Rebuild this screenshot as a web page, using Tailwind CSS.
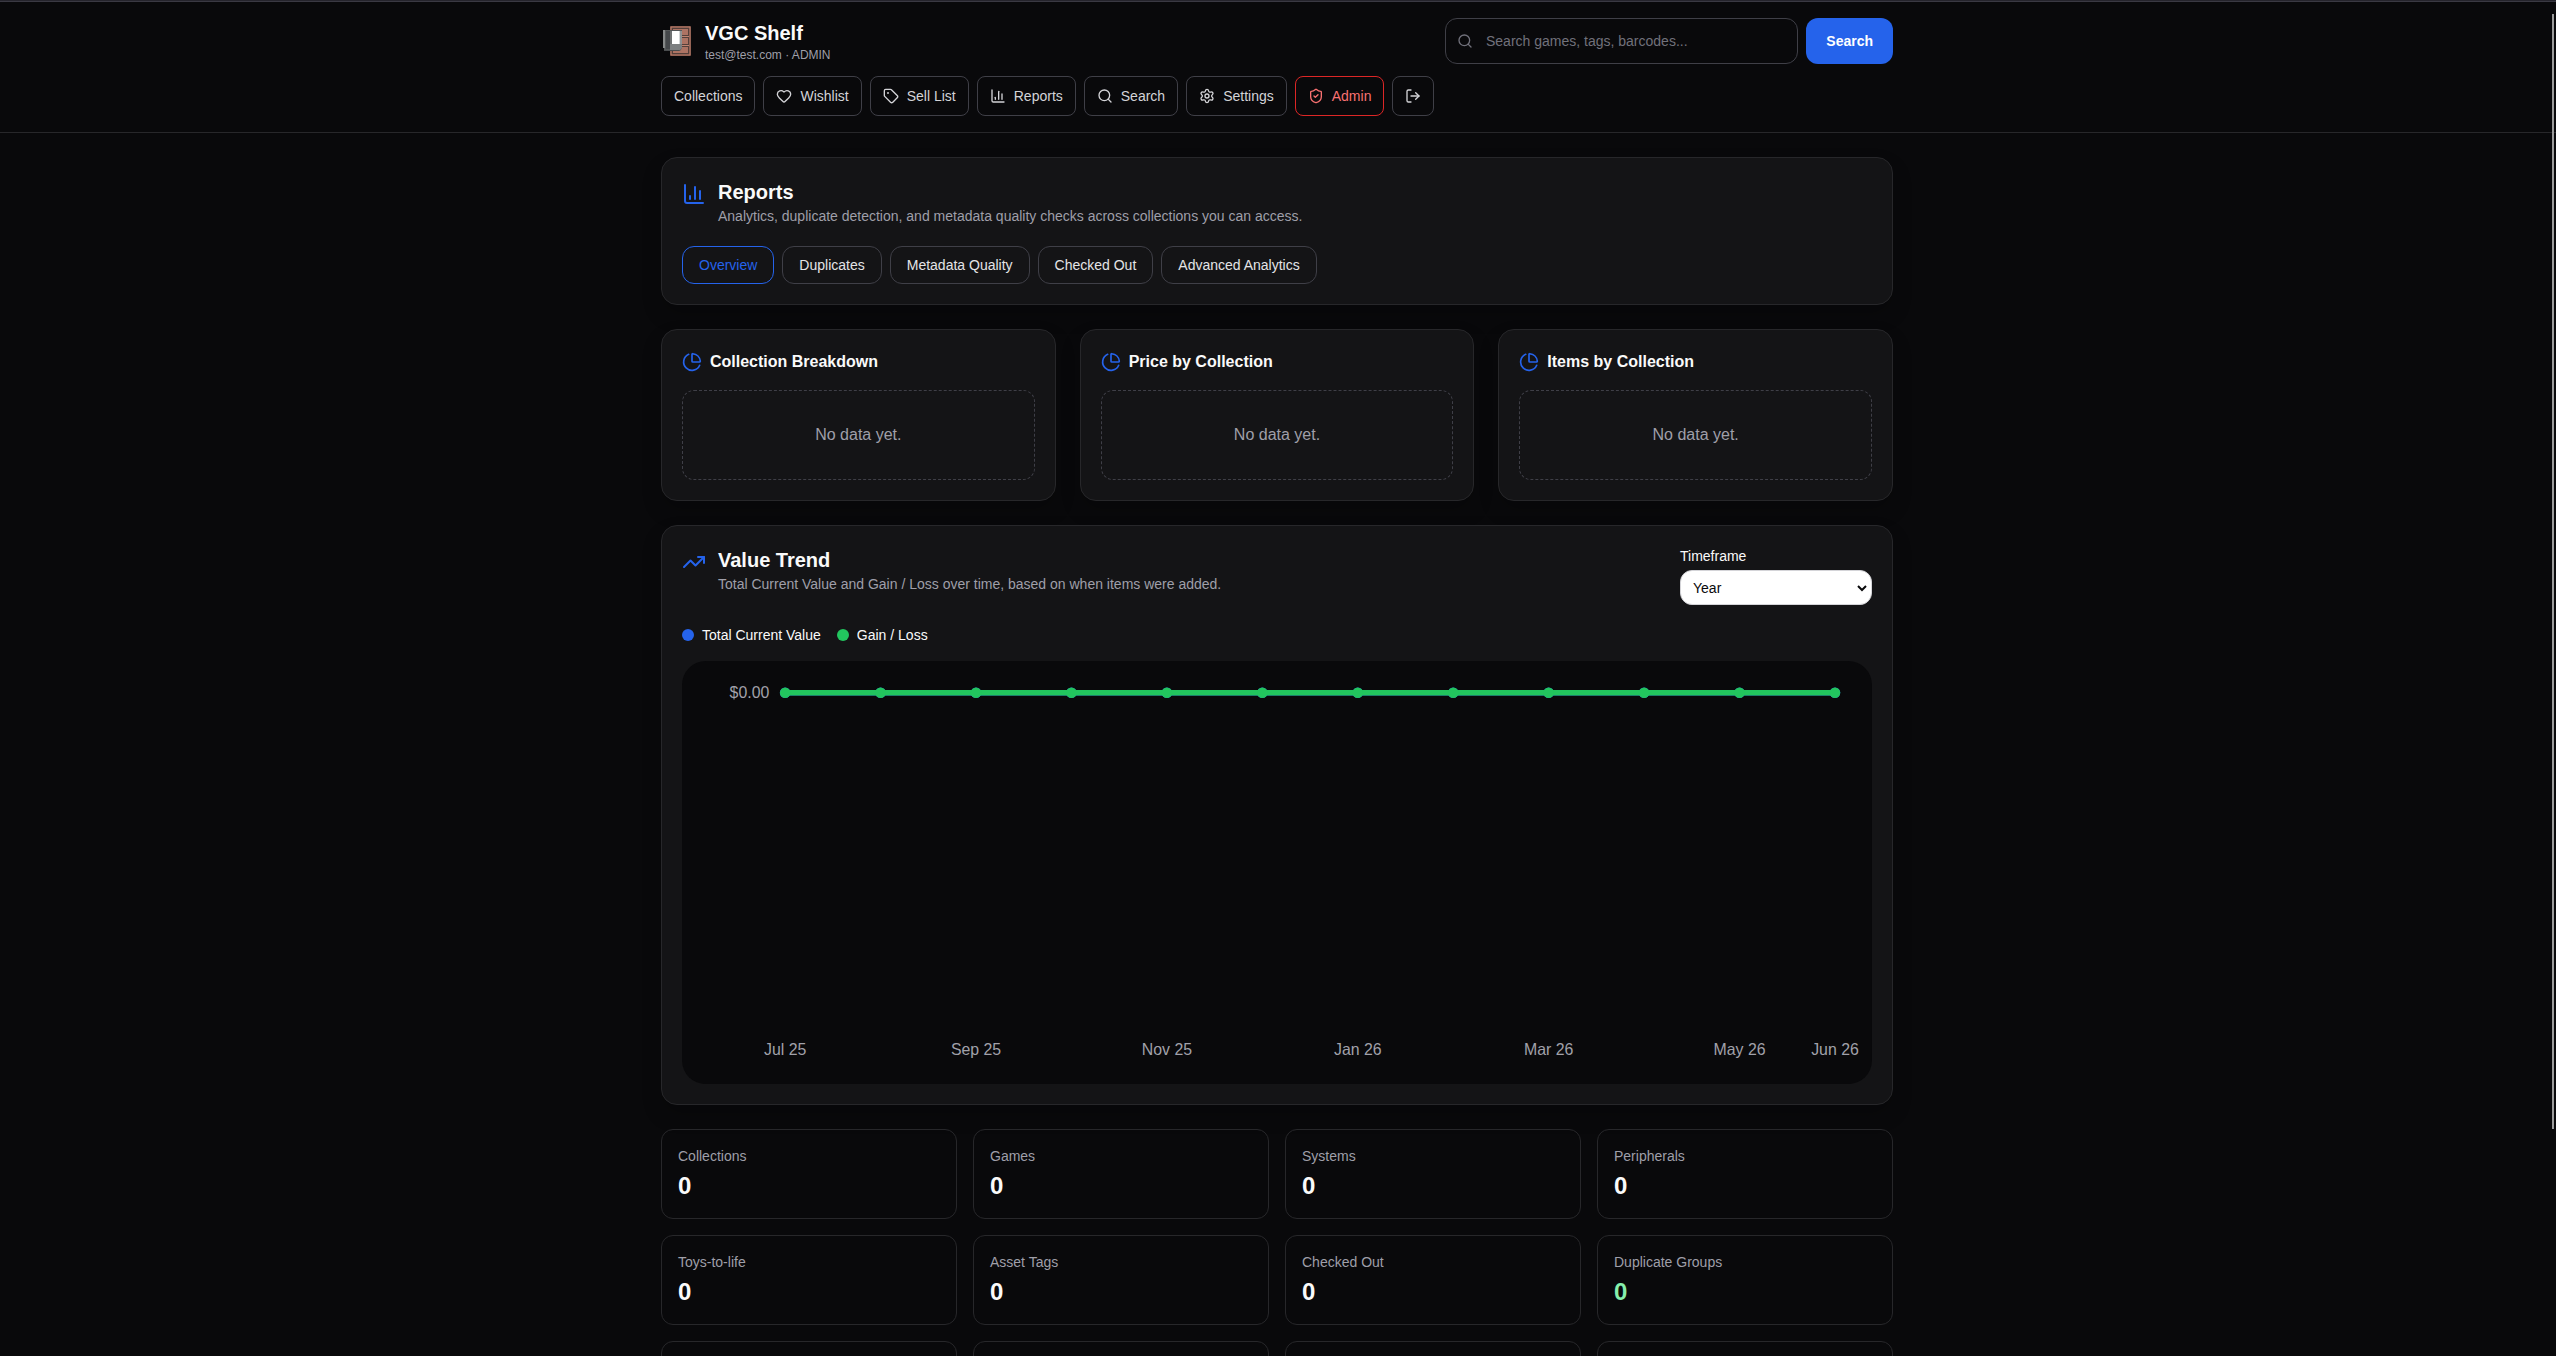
<!DOCTYPE html>
<html lang="en">
<head>
<meta charset="utf-8">
<meta name="viewport" content="width=device-width, initial-scale=1">
<title>VGC Shelf</title>
<script src="https://cdn.jsdelivr.net/npm/@tailwindcss/browser@4"></script>
</head>
<body class="relative h-screen overflow-hidden bg-[#09090b] pr-0.5 font-['Liberation_Sans',Arial,sans-serif] text-base text-zinc-50">
<svg class="hidden" aria-hidden="true">
  <symbol id="search" viewBox="0 0 24 24"><path d="m21 21-4.34-4.34"/><circle cx="11" cy="11" r="8"/></symbol>
  <symbol id="heart" viewBox="0 0 24 24"><path d="M2 9.5a5.5 5.5 0 0 1 9.591-3.676.56.56 0 0 0 .818 0A5.49 5.49 0 0 1 22 9.5c0 2.29-1.5 4-3 5.5l-5.492 5.313a2 2 0 0 1-3 .019L5 15c-1.5-1.5-3-3.2-3-5.5"/></symbol>
  <symbol id="tag" viewBox="0 0 24 24"><path d="M12.586 2.586A2 2 0 0 0 11.172 2H4a2 2 0 0 0-2 2v7.172a2 2 0 0 0 .586 1.414l8.704 8.704a2.426 2.426 0 0 0 3.42 0l6.58-6.58a2.426 2.426 0 0 0 0-3.42z"/><circle cx="7.5" cy="7.5" r=".5" fill="currentColor"/></symbol>
  <symbol id="chart" viewBox="0 0 24 24"><path d="M3 3v16a2 2 0 0 0 2 2h16"/><path d="M18 17V9"/><path d="M13 17V5"/><path d="M8 17v-3"/></symbol>
  <symbol id="settings" viewBox="0 0 24 24"><path d="M9.671 4.136a2.34 2.34 0 0 1 4.659 0 2.34 2.34 0 0 0 3.319 1.915 2.34 2.34 0 0 1 2.33 4.033 2.34 2.34 0 0 0 0 3.831 2.34 2.34 0 0 1-2.33 4.033 2.34 2.34 0 0 0-3.319 1.915 2.34 2.34 0 0 1-4.659 0 2.34 2.34 0 0 0-3.32-1.915 2.34 2.34 0 0 1-2.33-4.033 2.34 2.34 0 0 0 0-3.831A2.34 2.34 0 0 1 6.35 6.051a2.34 2.34 0 0 0 3.319-1.915"/><circle cx="12" cy="12" r="3"/></symbol>
  <symbol id="shield" viewBox="0 0 24 24"><path d="M20 13c0 5-3.5 7.5-7.66 8.95a1 1 0 0 1-.67-.01C7.5 20.5 4 18 4 13V6a1 1 0 0 1 1-1c2 0 4.5-1.2 6.24-2.72a1.17 1.17 0 0 1 1.52 0C14.51 3.81 17 5 19 5a1 1 0 0 1 1 1z"/><path d="m9 12 2 2 4-4"/></symbol>
  <symbol id="logout" viewBox="0 0 24 24"><path d="m16 17 5-5-5-5"/><path d="M21 12H9"/><path d="M9 21H5a2 2 0 0 1-2-2V5a2 2 0 0 1 2-2h4"/></symbol>
  <symbol id="pie" viewBox="0 0 24 24"><path d="M21 12c.552 0 1.005-.449.95-.998a10 10 0 0 0-8.953-8.951c-.55-.055-.998.398-.998.95v8a1 1 0 0 0 1 1z"/><path d="M21.21 15.89A10 10 0 1 1 8 2.83"/></symbol>
  <symbol id="trend" viewBox="0 0 24 24"><path d="M16 7h6v6"/><path d="m22 7-8.5 8.5-5-5L2 17"/></symbol>
</svg>

<div class="-mr-0.5 h-0.5 border-b border-[#3a3943] bg-[#25242c]"></div>

<header class="-mr-0.5 border-b border-zinc-800 pr-0.5">
  <div class="mx-auto flex max-w-7xl flex-col gap-3 px-6 py-4">
    <div class="flex items-center justify-between gap-4">
      <div class="flex items-center gap-3">
        <svg class="size-8" viewBox="0 0 32 32" role="img" aria-label="VGC Shelf logo">
          <rect x="9" y="1" width="21" height="30" rx="1" fill="#6b453b"/>
          <rect x="10" y="2" width="19" height="28" fill="none" stroke="#c08472"/>
          <rect x="11.500" y="3.500" width="16" height="7" fill="#ad7363" stroke="#54403b"/>
          <rect x="11.500" y="12.500" width="16" height="7" fill="#ad7363" stroke="#54403b"/>
          <rect x="11.500" y="21.500" width="16" height="7" fill="#ad7363" stroke="#54403b"/>
          <path d="M11 11.500h17M11 20.500h17" stroke="#c08472"/>
          <path d="M2 5h19v18l-2 3H3v-3H2z" fill="#555859"/>
          <path d="M2 5h2v18H2z" fill="#858888"/>
          <path d="M5 6h4v18H5z" fill="#44474a"/>
          <path d="M9 6h2v13H9z" fill="#6e7172"/>
          <path d="M9 19h12v4l-2 2H9z" fill="#7c7f80"/>
          <path d="M19 6h2v13h-2z" fill="#8f9293"/>
          <path d="M11 6h8v13h-8z" fill="#fff"/>
          <path d="M18 6h1v13h-1z" fill="#d5d7d8"/>
          <path d="M3 25.500h15" stroke="#494c4e"/>
        </svg>
        <div>
          <div class="text-xl leading-7 font-bold">VGC Shelf</div>
          <div class="text-xs leading-4 text-zinc-400">test@test.com · ADMIN</div>
        </div>
      </div>
      <form class="flex w-full max-w-md gap-2">
        <div class="relative flex-1">
          <svg class="absolute top-1/2 left-3 size-4 -translate-y-1/2 fill-none stroke-zinc-500 stroke-2 [stroke-linecap:round] [stroke-linejoin:round]"><use href="#search"/></svg>
          <input type="search" aria-label="Search games, tags, barcodes" placeholder="Search games, tags, barcodes..." class="w-full rounded-xl border border-zinc-700 bg-[#09090b] py-3 pr-3 pl-10 text-sm leading-5 placeholder:text-zinc-500">
        </div>
        <button type="submit" class="rounded-xl bg-[#2563eb] px-5 text-sm font-bold text-white">Search</button>
      </form>
    </div>
    <nav class="flex flex-wrap gap-2 text-sm text-zinc-300 [&_svg]:size-4 [&_svg]:fill-none [&_svg]:stroke-current [&_svg]:stroke-2 [&_svg]:[stroke-linecap:round] [&_svg]:[stroke-linejoin:round]">
      <a href="#" class="flex h-10 items-center gap-2 rounded-lg border border-zinc-700 px-3">Collections</a>
      <a href="#" class="flex h-10 items-center gap-2 rounded-lg border border-zinc-700 px-3"><svg><use href="#heart"/></svg>Wishlist</a>
      <a href="#" class="flex h-10 items-center gap-2 rounded-lg border border-zinc-700 px-3"><svg><use href="#tag"/></svg>Sell List</a>
      <a href="#" class="flex h-10 items-center gap-2 rounded-lg border border-zinc-700 px-3"><svg><use href="#chart"/></svg>Reports</a>
      <a href="#" class="flex h-10 items-center gap-2 rounded-lg border border-zinc-700 px-3"><svg><use href="#search"/></svg>Search</a>
      <a href="#" class="flex h-10 items-center gap-2 rounded-lg border border-zinc-700 px-3"><svg><use href="#settings"/></svg>Settings</a>
      <a href="#" class="flex h-10 items-center gap-2 rounded-lg border border-[#dc2626] px-3 text-[#f87171]"><svg><use href="#shield"/></svg>Admin</a>
      <button type="button" aria-label="Log out" class="flex h-10 items-center gap-2 rounded-lg border border-zinc-700 px-3"><svg><use href="#logout"/></svg></button>
    </nav>
  </div>
</header>

<main class="mx-auto flex max-w-7xl flex-col gap-6 p-6">
  <section class="rounded-2xl border border-zinc-800 bg-[#141416] p-5 shadow-[0_10px_20px_rgba(0,0,0,0.2)]">
    <div class="flex gap-3">
      <svg class="mt-1 size-6 fill-none stroke-[#2563eb] stroke-2 [stroke-linecap:round] [stroke-linejoin:round]"><use href="#chart"/></svg>
      <div>
        <h1 class="text-xl leading-7 font-bold">Reports</h1>
        <p class="text-sm leading-5 text-zinc-400">Analytics, duplicate detection, and metadata quality checks across collections you can access.</p>
      </div>
    </div>
    <div class="mt-5 flex flex-wrap gap-2 text-sm leading-5 text-zinc-200">
      <button type="button" class="rounded-xl border border-[#2563eb] px-4 py-2 text-[#2563eb]">Overview</button>
      <button type="button" class="rounded-xl border border-zinc-700 px-4 py-2">Duplicates</button>
      <button type="button" class="rounded-xl border border-zinc-700 px-4 py-2">Metadata Quality</button>
      <button type="button" class="rounded-xl border border-zinc-700 px-4 py-2">Checked Out</button>
      <button type="button" class="rounded-xl border border-zinc-700 px-4 py-2">Advanced Analytics</button>
    </div>
  </section>

  <div class="grid grid-cols-3 gap-6">
    <section class="rounded-2xl border border-zinc-800 bg-[#141416] p-5 shadow-[0_10px_20px_rgba(0,0,0,0.2)]">
      <h2 class="flex items-center gap-2 leading-6 font-bold"><svg class="size-5 fill-none stroke-[#2563eb] stroke-2 [stroke-linecap:round] [stroke-linejoin:round]"><use href="#pie"/></svg>Collection Breakdown</h2>
      <p class="mt-4 rounded-xl border border-dashed border-zinc-700 p-8 text-center leading-6 text-zinc-400">No data yet.</p>
    </section>
    <section class="rounded-2xl border border-zinc-800 bg-[#141416] p-5 shadow-[0_10px_20px_rgba(0,0,0,0.2)]">
      <h2 class="flex items-center gap-2 leading-6 font-bold"><svg class="size-5 fill-none stroke-[#2563eb] stroke-2 [stroke-linecap:round] [stroke-linejoin:round]"><use href="#pie"/></svg>Price by Collection</h2>
      <p class="mt-4 rounded-xl border border-dashed border-zinc-700 p-8 text-center leading-6 text-zinc-400">No data yet.</p>
    </section>
    <section class="rounded-2xl border border-zinc-800 bg-[#141416] p-5 shadow-[0_10px_20px_rgba(0,0,0,0.2)]">
      <h2 class="flex items-center gap-2 leading-6 font-bold"><svg class="size-5 fill-none stroke-[#2563eb] stroke-2 [stroke-linecap:round] [stroke-linejoin:round]"><use href="#pie"/></svg>Items by Collection</h2>
      <p class="mt-4 rounded-xl border border-dashed border-zinc-700 p-8 text-center leading-6 text-zinc-400">No data yet.</p>
    </section>
  </div>

  <section class="rounded-2xl border border-zinc-800 bg-[#141416] p-5 shadow-[0_10px_20px_rgba(0,0,0,0.2)]">
    <div class="flex items-start justify-between gap-4">
      <div class="flex gap-3">
        <svg class="mt-1 size-6 fill-none stroke-[#2563eb] stroke-2 [stroke-linecap:round] [stroke-linejoin:round]"><use href="#trend"/></svg>
        <div>
          <h2 class="text-xl leading-7 font-bold">Value Trend</h2>
          <p class="text-sm leading-5 text-zinc-400">Total Current Value and Gain / Loss over time, based on when items were added.</p>
        </div>
      </div>
      <div class="flex w-48 flex-col gap-1 text-sm leading-5">
        <label for="timeframe">Timeframe</label>
        <div class="relative">
          <select id="timeframe" class="block h-[35px] w-full appearance-none rounded-xl border border-zinc-300 bg-white px-3 text-sm text-zinc-950">
            <option>Year</option>
          </select>
          <svg class="pointer-events-none absolute top-1/2 right-1 size-3 -translate-y-1/2 fill-none stroke-zinc-950 stroke-2" viewBox="0 0 12 12" aria-hidden="true"><path d="m2 4 4 4 4-4"/></svg>
        </div>
      </div>
    </div>
    <div class="mt-5 flex gap-4 text-sm leading-5">
      <span class="flex items-center gap-2"><span class="size-3 rounded-full bg-[#2563eb]"></span>Total Current Value</span>
      <span class="flex items-center gap-2"><span class="size-3 rounded-full bg-[#22c55e]"></span>Gain / Loss</span>
    </div>
    <svg class="mt-4 block w-full" viewBox="0 0 900 320" role="img" aria-label="Value trend by month">
      <rect width="900" height="320" rx="18" fill="#09090b"/>
      <g id="series"></g>
      <g fill="#a1a1aa" font-size="12">
        <text x="66" y="28" text-anchor="end">$0.00</text>
        <g id="months" text-anchor="middle"></g>
      </g>
    </svg>
  </section>

  <div class="grid grid-cols-4 gap-4">
    <div class="rounded-xl border border-zinc-800 p-4"><div class="text-sm leading-5 text-zinc-400">Collections</div><div class="mt-1 text-2xl leading-8 font-bold">0</div></div>
    <div class="rounded-xl border border-zinc-800 p-4"><div class="text-sm leading-5 text-zinc-400">Games</div><div class="mt-1 text-2xl leading-8 font-bold">0</div></div>
    <div class="rounded-xl border border-zinc-800 p-4"><div class="text-sm leading-5 text-zinc-400">Systems</div><div class="mt-1 text-2xl leading-8 font-bold">0</div></div>
    <div class="rounded-xl border border-zinc-800 p-4"><div class="text-sm leading-5 text-zinc-400">Peripherals</div><div class="mt-1 text-2xl leading-8 font-bold">0</div></div>
    <div class="rounded-xl border border-zinc-800 p-4"><div class="text-sm leading-5 text-zinc-400">Toys-to-life</div><div class="mt-1 text-2xl leading-8 font-bold">0</div></div>
    <div class="rounded-xl border border-zinc-800 p-4"><div class="text-sm leading-5 text-zinc-400">Asset Tags</div><div class="mt-1 text-2xl leading-8 font-bold">0</div></div>
    <div class="rounded-xl border border-zinc-800 p-4"><div class="text-sm leading-5 text-zinc-400">Checked Out</div><div class="mt-1 text-2xl leading-8 font-bold">0</div></div>
    <div class="rounded-xl border border-zinc-800 p-4"><div class="text-sm leading-5 text-zinc-400">Duplicate Groups</div><div class="mt-1 text-2xl leading-8 font-bold text-[#86efac]">0</div></div>
    <div class="h-24 rounded-xl border border-zinc-800"></div>
    <div class="h-24 rounded-xl border border-zinc-800"></div>
    <div class="h-24 rounded-xl border border-zinc-800"></div>
    <div class="h-24 rounded-xl border border-zinc-800"></div>
  </div>
</main>

<!-- Scroll position indicator -->
<div class="absolute top-3.5 right-0.5 h-[1115px] w-0.5 bg-[#9b9b9b]"></div>

<script>
  const x = i => 78 + i * 794 / 11;
  const points = [...Array(12).keys()];
  document.getElementById('series').innerHTML = ['#2563eb', '#22c55e'].map(color =>
    `<polyline fill="none" stroke="${color}" stroke-width="4" points="${points.map(i => x(i) + ',24').join(' ')}"/>` +
    points.map(i => `<circle cx="${x(i)}" cy="24" r="4" fill="${color}"/>`).join('')).join('');
  const months = { 0: 'Jul 25', 2: 'Sep 25', 4: 'Nov 25', 6: 'Jan 26', 8: 'Mar 26', 10: 'May 26', 11: 'Jun 26' };
  document.getElementById('months').innerHTML = Object.entries(months)
    .map(([i, label]) => `<text x="${x(+i)}" y="298">${label}</text>`).join('');
</script>
</body>
</html>
